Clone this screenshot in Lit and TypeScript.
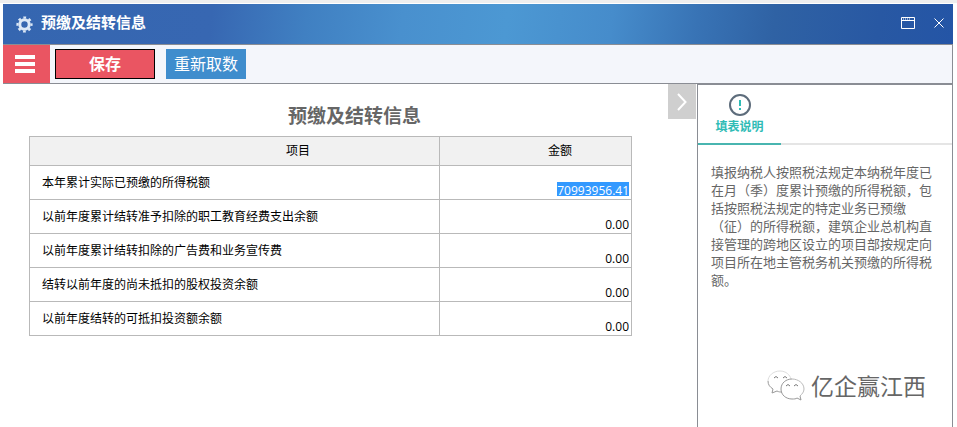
import { LitElement, html, css } from "lit";
import { customElement, state } from "lit/decorators.js";

interface Item {
  id: string;
  label: string;
  amount: string;
}

const ITEMS: Item[] = [
  { id: "prepaid", label: "本年累计实际已预缴的所得税额", amount: "70993956.41" },
  { id: "education", label: "以前年度累计结转准予扣除的职工教育经费支出余额", amount: "0.00" },
  { id: "advertising", label: "以前年度累计结转扣除的广告费和业务宣传费", amount: "0.00" },
  { id: "equity", label: "结转以前年度的尚未抵扣的股权投资余额", amount: "0.00" },
  { id: "investment", label: "以前年度结转的可抵扣投资额余额", amount: "0.00" },
];

@customElement("app-root")
export class AppRoot extends LitElement {
  @state() private selected = "prepaid";

  static styles = css`
    :host {
      display: flex;
      flex-direction: column;
      box-sizing: border-box;
      min-height: 100vh;
      padding: 0 4px 0 3px;
      border-top: 3px solid #eeeeee;
      background: #fff;
      color: #000;
      font: 12px/18px "Open Sans", "Noto Sans CJK SC", sans-serif;
    }
    *, *::before, *::after { box-sizing: border-box; }
    button { font: inherit; border: 0; padding: 0; margin: 0; background: none; color: inherit; cursor: pointer; }
    svg { display: block; }
    h1, h2, p { margin: 0; }

    .titlebar {
      display: flex;
      align-items: center;
      gap: 8px;
      height: 41px;
      margin-top: 1px;
      padding: 0 9px 0 13px;
      border-bottom: 1px solid #8a8d94;
      background: linear-gradient(97deg, #3566b0 0%, #3767b2 22%, #4080c2 32%, #4990ce 42%, #4c98d3 53%, #468ccb 64%, #3873b5 73%, #2f62a4 81%, #2858a3 92%, #2455a6 100%);
      color: #fff;
    }
    .titlebar h1 { flex: 1; font-size: 15px; line-height: 20px; font-weight: 700; padding-bottom: 4px; }
    .winbtns { display: flex; align-items: center; gap: 19px; padding-bottom: 2px; }

    .toolbar {
      display: flex;
      align-items: center;
      height: 39px;
      border-right: 1px solid #8a8d94;
      border-bottom: 1px solid #8a8d94;
      background: #f4f6fb;
      color: #fff;
      font-size: 16px;
      line-height: 22px;
    }
    .menu { display: flex; align-items: center; align-self: stretch; width: 47px; padding-left: 12px; background: #ea5562; }
    .save { width: 100px; height: 30px; margin-left: 5px; border: 1px solid #000; background: #ea5562; font-weight: 700; }
    .reload { width: 80px; height: 30px; margin-left: 11px; background: #3f8dcd; }

    .body { display: flex; flex: 1; }
    .main { display: flex; flex: 1; align-items: flex-start; min-width: 0; }
    .form { flex: 1; padding: 18px 36px 18px 26px; }
    .form h2 { padding-left: 48px; font-size: 19px; line-height: 28px; margin-bottom: 6px; text-align: center; color: #666; }
    .toggle { display: flex; align-items: center; justify-content: center; width: 28px; height: 35px; margin-right: 1px; background: #cfcfcf; }

    table { width: 100%; border-collapse: collapse; table-layout: fixed; }
    .c-amount { width: 192px; }
    th, td { border: 1px solid #b9b9b9; padding: 0 1px 0 12px; height: 34px; }
    thead th { height: 29px; background: #f1f1f1; font-weight: 400; }
    thead .name { padding-left: 128px; }
    thead .amount { padding-left: 50px; }
    tbody th { text-align: left; font-weight: 400; }
    tbody td { text-align: right; vertical-align: bottom; }
    input {
      display: block;
      field-sizing: content;
      height: 17px;
      margin: 0 1px 0 auto;
      padding: 0;
      border: 0;
      outline: 0;
      background: none;
      font: inherit;
      line-height: 17px;
      text-align: right;
    }
    input.selected { background: linear-gradient(#3399ff, #3399ff) 0 0 / 100% 14px no-repeat; color: #fff; }

    .side {
      position: relative;
      width: 256px;
      border: solid #8a8d94;
      border-width: 1px 1px 0 1px;
    }
    .tabs { display: flex; border-bottom: 2px solid #e5e5e5; }
    .tab {
      display: flex;
      flex-direction: column;
      align-items: center;
      gap: 2px;
      width: 83px;
      height: 60px;
      margin-bottom: -2px;
      padding-top: 9px;
      border-bottom: 2px solid #48b5b0;
      color: #2fbcb6;
      font-weight: 700;
    }
    .note { padding: 18px 20px 0 13px; font-size: 13px; color: #666; text-spacing-trim: space-all; }
    .mark {
      position: absolute;
      right: 26px;
      bottom: 24px;
      display: flex;
      align-items: center;
      gap: 6px;
      font-size: 23px;
      line-height: 34px;
      color: #666;
      white-space: nowrap;
      text-shadow: 1px 1px 0 #fff;
    }
  `;

  render() {
    return html`
      <header class="titlebar">
        <svg width="17" height="17" viewBox="0 0 17 17" aria-hidden="true">
          <circle cx="8.500" cy="8.500" r="4.700" fill="none" stroke="#dce8f6" stroke-width="3" />
          <circle cx="8.500" cy="8.500" r="7" fill="none" stroke="#dce8f6" stroke-width="2.200" stroke-dasharray="2.750 2.748" stroke-dashoffset="1.370" />
        </svg>
        <h1>预缴及结转信息</h1>
        <div class="winbtns">
          <button aria-label="最大化">
            <svg width="14" height="12" viewBox="0 0 14 12" fill="none" stroke="#fff">
              <path d="M.5.500h13v11H.5zM.5 3.500h13" />
              <path d="M2 2h8" stroke-dasharray="1 1" />
            </svg>
          </button>
          <button aria-label="关闭">
            <svg width="10" height="10" viewBox="0 0 10 10" stroke="#fff"><path d="M.5.500l9 9M9.500.500l-9 9" /></svg>
          </button>
        </div>
      </header>

      <nav class="toolbar">
        <button class="menu" aria-label="菜单">
          <svg width="20" height="18" viewBox="0 0 20 18" fill="#fff"><path d="M0 0h20v4H0zM0 7h20v4H0zM0 14h20v4H0z" /></svg>
        </button>
        <button class="save">保存</button>
        <button class="reload">重新取数</button>
      </nav>

      <div class="body">
        <main class="main">
          <section class="form">
            <h2>预缴及结转信息</h2>
            <table>
              <colgroup><col /><col class="c-amount" /></colgroup>
              <thead>
                <tr><th class="name" scope="col">项目</th><th class="amount" scope="col">金额</th></tr>
              </thead>
              <tbody>
                ${ITEMS.map(
                  (item) => html`<tr>
                    <th scope="row"><label for=${item.id}>${item.label}</label></th>
                    <td>
                      <input
                        id=${item.id}
                        class=${this.selected === item.id ? "selected" : ""}
                        .value=${item.amount}
                        @focus=${() => (this.selected = item.id)}
                      />
                    </td>
                  </tr>`
                )}
              </tbody>
            </table>
          </section>
          <button class="toggle" aria-label="收起说明">
            <svg width="10" height="18" viewBox="0 0 10 18" fill="none" stroke="#fff" stroke-width="2"><path d="M1 1l7.500 8L1 17" /></svg>
          </button>
        </main>

        <aside class="side">
          <div class="tabs">
            <button class="tab">
              <svg width="22" height="22" viewBox="0 0 22 22" fill="none">
                <circle cx="11" cy="11" r="10" stroke="#5d6c7b" stroke-width="2" />
                <path d="M11 6v6M11 14v2" stroke="#2fbcb6" stroke-width="2" />
              </svg>
              填表说明
            </button>
          </div>
          <p class="note">填报纳税人按照税法规定本纳税年度已在月（季）度累计预缴的所得税额，包括按照税法规定的特定业务已预缴（征）的所得税额，建筑企业总机构直接管理的跨地区设立的项目部按规定向项目所在地主管税务机关预缴的所得税额。</p>
          <div class="mark">
            <svg width="38" height="34" viewBox="0 0 38 34" fill="none" stroke="#999" stroke-width="1">
              <path d="M13 2c6 0 10 4 11 8M13 2C6 2 1 7 1 12" stroke="#ddd" />
              <path d="M1 12c0 4 2 6 5 8l-1 4 5-2c2 1 3 1 5 1" />
              <path d="M25 10c6 0 12 4 12 10 0 3-2 5-4 7" stroke="#bbb" />
              <path d="M25 10c-6 0-11 4-11 10s5 10 11 10c2 0 4 0 5-1l4 2-1-4" />
              <path d="M7 9q2-3 4 0M16 9q2-3 4 0M19 17q2-3 4 0M27 17q2-3 4 0" stroke="#777" />
            </svg>
            <span>亿企赢江西</span>
          </div>
        </aside>
      </div>
    `;
  }
}
